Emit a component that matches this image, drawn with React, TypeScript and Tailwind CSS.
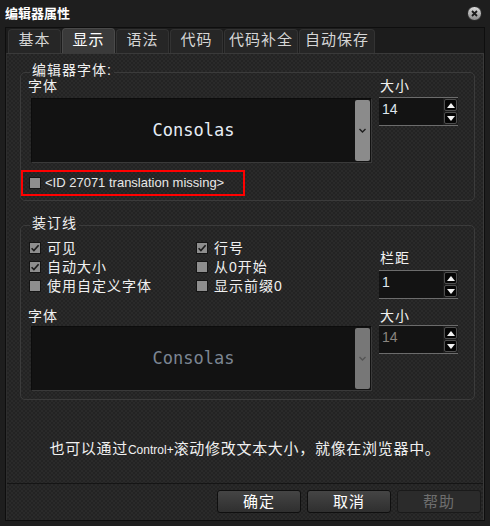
import React from "react";

const tabs = [
  { label: "基本", w: "w-[53px]" },
  { label: "显示", w: "w-[53px]", active: true },
  { label: "语法", w: "w-[53px]" },
  { label: "代码", w: "w-[53px]" },
  { label: "代码补全", w: "w-[74px]" },
  { label: "自动保存", w: "w-[76px]" },
];

function CheckBox({ checked = false }: { checked?: boolean }) {
  return (
    <span className="flex h-[12px] w-[12px] shrink-0 items-center justify-center border border-[#151515] bg-[#8e8e8e]">
      {checked && (
        <svg width="10" height="10" viewBox="0 0 10 10">
          <path d="M1.6 5.2 L3.9 7.6 L8.6 2.2" fill="none" stroke="#1b1b1b" strokeWidth="1.6" />
        </svg>
      )}
    </span>
  );
}

function Arrow({ up = false }: { up?: boolean }) {
  return (
    <span className="flex h-[12px] w-[13px] items-center justify-center rounded-[2px] border border-[#4e4e4e] bg-[#050505]">
      <svg width="8" height="5" viewBox="0 0 8 5">
        <path d={up ? "M0 5 L4 0 L8 5 Z" : "M0 0 L8 0 L4 5 Z"} fill="#f2f2f2" />
      </svg>
    </span>
  );
}

function Spinner({ value, dim = false }: { value: string; dim?: boolean }) {
  return (
    <div className="flex h-[29px] w-[79px] border-y border-[#6c6c6c] bg-[#131313]">
      <span
        className={`flex-1 pl-[3px] pt-[3px] font-['Liberation_Sans',sans-serif] text-[14px] leading-[16px] ${
          dim ? "text-[#8a8580]" : "text-[#dfe6ee]"
        }`}
      >
        {value}
      </span>
      <div className="flex w-[15px] flex-col items-center justify-center gap-[1px] bg-[#1d1d1d]">
        <Arrow up />
        <Arrow />
      </div>
    </div>
  );
}

function FontBox({ dim = false }: { dim?: boolean }) {
  return (
    <div className="ml-[3px] flex h-[65px] w-[341px] border border-[#0c0c0c] border-r-[#3a3a3a] border-b-[#3a3a3a] bg-[#121212]">
      <div className="flex flex-1 items-center justify-center">
        <span
          className={`font-['DejaVu_Sans_Mono',monospace] text-[17px] ${
            dim ? "text-[#7c8692]" : "text-[#e6edf5]"
          }`}
        >
          Consolas
        </span>
      </div>
      <div
        className={`my-[1px] mr-[1px] flex w-[15px] items-center justify-center rounded-[2px] ${
          dim ? "bg-[#777777]" : "bg-[#8b8b8b]"
        }`}
      >
        <svg width="7" height="5" viewBox="0 0 7 5">
          <path d="M0.5 1 L3.5 4 L6.5 1" fill="none" stroke={dim ? "#555" : "#1e1e1e"} strokeWidth="1.4" />
        </svg>
      </div>
    </div>
  );
}

const label = "text-[14px] leading-[16px] tracking-[1px] text-[#f0f0f0]";

export default function App() {
  return (
    <div className="flex h-[526px] w-[490px] flex-col overflow-hidden bg-[#1e1e1e] font-['Liberation_Sans','Noto_Sans_CJK_SC',sans-serif] text-[#f0f0f0]">
      {/* title bar */}
      <div className="flex h-[27px] shrink-0 items-center justify-between pl-[5px] pr-[8px]">
        <span className="text-[13px] font-bold text-white">编辑器属性</span>
        <span className="flex h-[15px] w-[15px] items-center justify-center rounded-full border border-[#2a2a2a] bg-linear-to-b from-[#dcdcdc] to-[#8a8a8a]">
          <svg width="7" height="7" viewBox="0 0 7 7">
            <path d="M1 1 L6 6 M6 1 L1 6" stroke="#1a1a1a" strokeWidth="1.8" />
          </svg>
        </span>
      </div>

      <div className="ml-[5px] flex h-[494px] w-[480px] flex-col border border-[#0e0e0e]">
        {/* tabs */}
        <div className="flex h-[25px] shrink-0 items-end gap-[1px] bg-[#1c1c1c] pl-[2px]">
          {tabs.map((t) => (
            <div
              key={t.label}
              className={`${t.w} flex items-center justify-center rounded-t-[4px] border border-b-0 pb-[2px] text-[15px] tracking-[1px] ${
                t.active
                  ? "h-[25px] border-[#4a4a4a] bg-[#3a3a3a] text-white"
                  : "h-[24px] border-[#333333] bg-[#262626] text-[#d6d6d6]"
              }`}
            >
              {t.label}
            </div>
          ))}
        </div>

        {/* pane */}
        <div className="flex flex-1 flex-col border-x border-t border-x-[#2e2e2e] border-r-[#3a3a3a] border-t-[#3a3a3a] bg-[image:repeating-conic-gradient(#2a2a2a_0%_25%,#232323_0%_50%)] bg-[length:4px_4px] pt-[8px]">
          <fieldset className="m-0 ml-[13px] w-[455px] min-w-0 rounded-[5px] border border-[#3b3b3b] p-0 pb-[4px]">
            <legend className={`ml-[9px] px-[2px] pb-[4px] ${label}`}>编辑器字体:</legend>
            <div className="-mt-[4px] flex">
              <div className="ml-[7px] flex flex-col">
                <span className={label}>字体</span>
                <div className="mt-[4px]">
                  <FontBox />
                </div>
              </div>
              <div className="ml-[7px] flex flex-col">
                <span className={`pl-[1px] ${label}`}>大小</span>
                <div className="mt-[3px]">
                  <Spinner value="14" />
                </div>
              </div>
            </div>
            <div className="mt-[7px] flex h-[26px] w-[224px] items-center gap-[4px] border-2 border-[#ff0000] pl-[6px]">
              <CheckBox />
              <span className="text-[13px] text-[#e8e8e8]">&lt;ID 27071 translation missing&gt;</span>
            </div>
          </fieldset>

          <fieldset className="m-0 ml-[13px] mt-[14px] w-[455px] min-w-0 rounded-[5px] border border-[#3b3b3b] p-0 pb-[8px]">
            <legend className={`ml-[9px] px-[2px] pb-[4px] ${label}`}>装订线</legend>
            <div className="mt-[3px] flex">
              <div className="ml-[8px] grid w-[350px] auto-rows-[19px] grid-cols-[167px_1fr]">
                <div className="flex items-center gap-[6px]">
                  <CheckBox checked />
                  <span className={label}>可见</span>
                </div>
                <div className="flex items-center gap-[6px]">
                  <CheckBox checked />
                  <span className={label}>行号</span>
                </div>
                <div className="flex items-center gap-[6px]">
                  <CheckBox checked />
                  <span className={label}>自动大小</span>
                </div>
                <div className="flex items-center gap-[6px]">
                  <CheckBox />
                  <span className={label}>从0开始</span>
                </div>
                <div className="flex items-center gap-[6px]">
                  <CheckBox />
                  <span className={label}>使用自定义字体</span>
                </div>
                <div className="flex items-center gap-[6px]">
                  <CheckBox />
                  <span className={label}>显示前缀0</span>
                </div>
              </div>
              <div className="flex flex-col pt-[12px]">
                <span className={`pl-[1px] ${label}`}>栏距</span>
                <div className="mt-[4px]">
                  <Spinner value="1" />
                </div>
              </div>
            </div>
            <div className="mt-[9px] flex">
              <div className="ml-[7px] flex flex-col">
                <span className={label}>字体</span>
                <div className="mt-[2px]">
                  <FontBox dim />
                </div>
              </div>
              <div className="ml-[7px] flex flex-col">
                <span className={`pl-[1px] ${label}`}>大小</span>
                <div className="mt-[1px]">
                  <Spinner value="14" dim />
                </div>
              </div>
            </div>
          </fieldset>

          <p className="mt-[39px] text-center text-[15px] leading-[20px] tracking-[0.7px] text-[#f0f0f0]">
            也可以通过<span className="text-[12px] tracking-normal">Control+</span>滚动修改文本大小，就像在浏览器中。
          </p>

          <div className="flex-1" />

          <div className="flex h-[37px] shrink-0 justify-end gap-[6px] border-t border-[#151515] pr-[2px] pt-[6px]">
            <button className="h-[23px] w-[84px] rounded-[3px] border border-[#0f0f0f] bg-linear-to-b from-[#454545] to-[#2f2f2f] text-[15px] tracking-[1px] text-white">
              确定
            </button>
            <button className="h-[23px] w-[84px] rounded-[3px] border border-[#0f0f0f] bg-linear-to-b from-[#454545] to-[#2f2f2f] text-[15px] tracking-[1px] text-white">
              取消
            </button>
            <button className="h-[23px] w-[84px] rounded-[3px] border border-[#1a1a1a] bg-[#2b2b2b] text-[15px] tracking-[1px] text-[#6e6e6e]">
              帮助
            </button>
          </div>
        </div>
      </div>
    </div>
  );
}
